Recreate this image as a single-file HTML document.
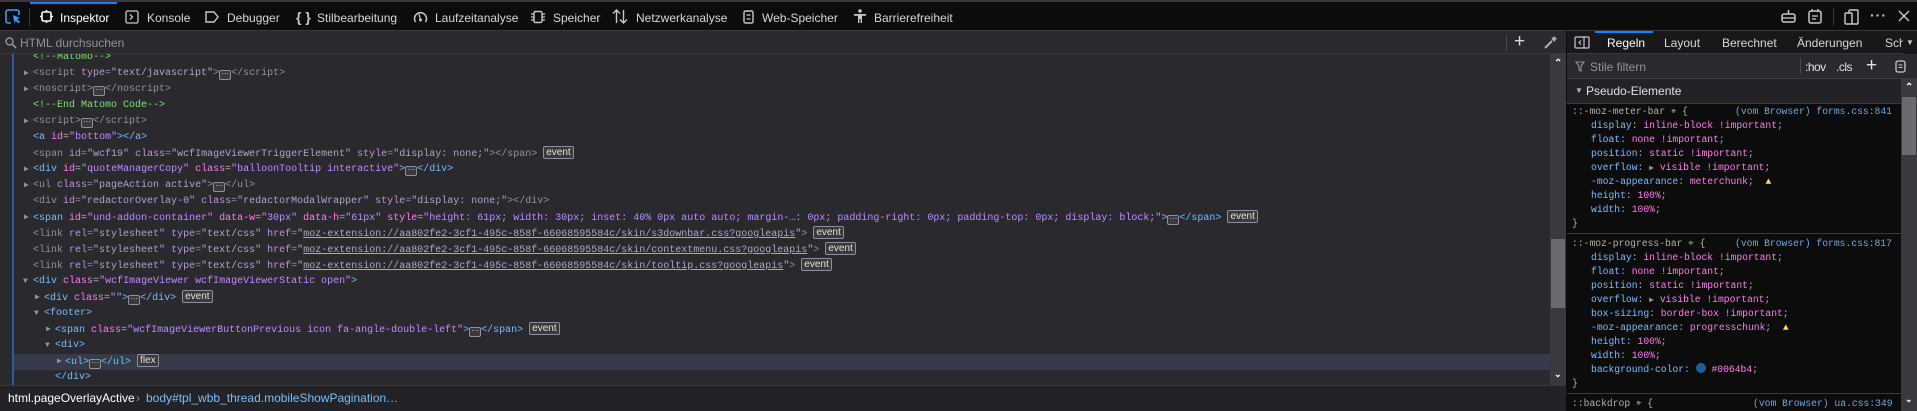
<!DOCTYPE html>
<html><head><meta charset="utf-8"><style>
*{margin:0;padding:0;box-sizing:border-box}
body{width:1917px;height:411px;overflow:hidden;background:#2a2a2e;position:relative;font-family:"Liberation Sans",sans-serif;}
.abs{position:absolute}
#top{left:0;top:0;width:1917px;height:31px;background:#0c0c0d;border-top:2px solid #38383d;border-bottom:1px solid #38383d}
.tab{position:absolute;top:9px;font-size:12px;color:#d7d7db;white-space:nowrap}
.ic{position:absolute;top:8px}
#search{left:0;top:31px;width:1566px;height:23px;background:#2a2a2e;border-bottom:1px solid #38383d}
#markup{left:0;top:54px;width:1550px;height:331px;background:#2a2a2e;overflow:hidden}
.ln{position:absolute;left:0;width:1550px;height:16px;line-height:16px;font-family:"Liberation Mono",monospace;font-size:10px;color:#b1b1b3;white-space:pre}
.tw{position:absolute;top:0;font-size:8px;color:#939395}
.t{color:#75bfff}.a{color:#ff7de9}.v{color:#b98eff}.c{color:#86de74}.p{color:#b1b1b3}
.d,.d .t,.d .a,.d .v{color:#939395}.d .a{color:#b49ad0}.d .v{color:#a9a9c0}
.u{text-decoration:underline}
.b{display:inline-block;border:1px solid #8f8f9d;border-radius:2px;font-family:"Liberation Sans",sans-serif;font-size:10px;line-height:11px;padding:0 2px;color:#e0e0e2;background:#3a3a3e;vertical-align:1px}
.e{display:inline-block;width:12px;height:10px;border:1px solid #8f8f9d;border-radius:2px;background:#3a3a3e;vertical-align:-1px;font-size:8px;line-height:6px;text-align:center;color:#ddd;font-family:"Liberation Sans",sans-serif}
#crumb{left:0;top:385px;width:1566px;height:26px;background:#232327;border-top:1px solid #38383d;font-size:12px;line-height:25px;color:#e0e0e2}
.rl{position:absolute;left:0;height:14px;line-height:14px;font-family:"Liberation Mono",monospace;font-size:9.7px;color:#b1b1b3;white-space:pre}
.pn{color:#75bfff}.pv{color:#ff7de9}.src{color:#6ea8d8}
</style></head><body>
<div id="top" class="abs">
 <svg class="abs" style="left:5px;top:7px" width="17" height="16" viewBox="0 0 17 16"><path d="M6 14H3a2 2 0 0 1-2-2V3a2 2 0 0 1 2-2h9a2 2 0 0 1 2 2v3" fill="none" stroke="#3a9cf5" stroke-width="1.6"/><path d="M8 6l7 3-3 1 3 3-1.5 1.5-3-3-1 3z" fill="#3a9cf5"/></svg>
 <div class="abs" style="left:29px;top:6px;width:1px;height:18px;background:#38383d"></div>
 <div class="abs" style="left:30px;top:0;width:87px;height:2px;background:#0a84ff"></div>
 <svg class="abs" style="left:40px;top:8px" width="13" height="13" viewBox="0 0 13 13"><rect x="2" y="2" width="9" height="9" rx="1.5" fill="none" stroke="#fff" stroke-width="1.6"/><path d="M6.5 0v2M6.5 11v2M0 6.5h2M11 6.5h2" stroke="#fff" stroke-width="1.6"/></svg>
 <div class="tab" style="left:60px;color:#fff">Inspektor</div>
 <svg class="abs" style="left:125px;top:8px" width="14" height="14" viewBox="0 0 14 14"><rect x="1" y="1" width="12" height="12" rx="1.5" fill="none" stroke="#c8c8cc" stroke-width="1.3"/><path d="M5 4.5l2.5 2.5L5 9.5" fill="none" stroke="#c8c8cc" stroke-width="1.3"/></svg>
 <div class="tab" style="left:147px">Konsole</div>
 <svg class="abs" style="left:205px;top:9px" width="14" height="12" viewBox="0 0 14 12"><path d="M1 1h8l4 5-4 5H1z" fill="none" stroke="#c8c8cc" stroke-width="1.4"/></svg>
 <div class="tab" style="left:227px">Debugger</div>
 <div class="tab" style="left:296px;top:7px;font-size:14px;font-weight:bold;color:#c8c8cc">{ }</div>
 <div class="tab" style="left:317px">Stilbearbeitung</div>
 <svg class="abs" style="left:413px;top:8px" width="15" height="14" viewBox="0 0 15 14"><path d="M2.5 12A6 6 0 1 1 12.5 12" fill="none" stroke="#c8c8cc" stroke-width="1.5"/><circle cx="7.5" cy="10" r="1.5" fill="#c8c8cc"/><path d="M7.5 10L6 4" stroke="#c8c8cc" stroke-width="1.3"/></svg>
 <div class="tab" style="left:435px">Laufzeitanalyse</div>
 <svg class="abs" style="left:531px;top:8px" width="14" height="14" viewBox="0 0 14 14"><rect x="3" y="1.5" width="8" height="11" rx="1.5" fill="none" stroke="#c8c8cc" stroke-width="1.4"/><path d="M0 4h3M0 7h3M0 10h3M11 4h3M11 7h3M11 10h3" stroke="#c8c8cc" stroke-width="1.2"/></svg>
 <div class="tab" style="left:553px">Speicher</div>
 <svg class="abs" style="left:612px;top:7px" width="16" height="15" viewBox="0 0 16 15"><path d="M4.5 14V1M1 4.5l3.5-3.5L8 4.5M11.5 1v13M8 10.5l3.5 3.5 3.5-3.5" fill="none" stroke="#c8c8cc" stroke-width="1.4"/></svg>
 <div class="tab" style="left:636px">Netzwerkanalyse</div>
 <svg class="abs" style="left:743px;top:8px" width="11" height="14" viewBox="0 0 11 14"><rect x="1" y="1" width="9" height="12" rx="1.5" fill="none" stroke="#c8c8cc" stroke-width="1.4"/><path d="M3.5 5h4M3.5 9h4" stroke="#c8c8cc" stroke-width="1.3"/></svg>
 <div class="tab" style="left:762px">Web-Speicher</div>
 <svg class="abs" style="left:853px;top:7px" width="14" height="15" viewBox="0 0 14 15"><circle cx="7" cy="2" r="1.8" fill="#c8c8cc"/><path d="M1 5h12v1.8H9V14H7.6v-4H6.4v4H5V6.8H1z" fill="#c8c8cc"/></svg>
 <div class="tab" style="left:874px">Barrierefreiheit</div>
 <svg class="abs" style="left:1781px;top:7px" width="15" height="15" viewBox="0 0 15 15"><path d="M7.5 1v4" stroke="#c8c8cc" stroke-width="1.5"/><rect x="1" y="5" width="13" height="8" rx="2" fill="none" stroke="#c8c8cc" stroke-width="1.5"/><path d="M1 9h13" stroke="#c8c8cc" stroke-width="1.3"/></svg>
 <svg class="abs" style="left:1808px;top:7px" width="14" height="15" viewBox="0 0 14 15"><rect x="1" y="2" width="12" height="12" rx="2" fill="none" stroke="#c8c8cc" stroke-width="1.5"/><path d="M4 0v3M10 0v3M4 7h6M4 10h4" stroke="#c8c8cc" stroke-width="1.3"/></svg>
 <div class="abs" style="left:1833px;top:6px;width:1px;height:18px;background:#38383d"></div>
 <svg class="abs" style="left:1844px;top:7px" width="15" height="16" viewBox="0 0 15 16"><rect x="1" y="4" width="7" height="11" rx="1" fill="none" stroke="#c8c8cc" stroke-width="1.4"/><path d="M5 4V2a1 1 0 0 1 1-1h7a1 1 0 0 1 1 1v12a1 1 0 0 1-1 1h-5" fill="none" stroke="#c8c8cc" stroke-width="1.4"/></svg>
 <div class="tab" style="left:1870px;top:5px;font-size:14px;font-weight:bold;letter-spacing:1px;color:#c8c8cc">···</div>
 <svg class="abs" style="left:1898px;top:8px" width="12" height="12" viewBox="0 0 12 12"><path d="M1 1l10 10M11 1L1 11" stroke="#c8c8cc" stroke-width="1.4"/></svg>
</div>
<div id="search" class="abs">
 <svg class="abs" style="left:5px;top:6px" width="12" height="12" viewBox="0 0 12 12"><circle cx="4.5" cy="4.5" r="3.5" fill="none" stroke="#939395" stroke-width="1.4"/><path d="M7 7l4 4" stroke="#939395" stroke-width="1.6"/></svg>
 <div class="abs" style="left:20px;top:5px;font-size:12px;color:#939395">HTML durchsuchen</div>
 <div class="abs" style="left:1506px;top:4px;width:1px;height:16px;background:#4a4a4f"></div>
 <div class="abs" style="left:1514px;top:0px;font-size:19px;line-height:22px;color:#d7d7db">+</div>
 <svg class="abs" style="left:1543px;top:4px" width="15" height="15" viewBox="0 0 15 15"><path d="M2 13l7-7M9 3l3 3" stroke="#b1b1b3" stroke-width="2"/><path d="M11 1l3 3-2 1-2-2z" fill="#b1b1b3"/></svg>
</div>
<div id="markup" class="abs">
 <div class="abs" style="left:12px;top:0;width:2px;height:331px;background:#2f5c9c"></div>
 <div class="abs" style="left:14px;top:300px;width:1536px;height:16px;background:#353b48"></div>
 <div class="ln" style="top:-4px;left:33px"><span class="c">&lt;!--Matomo--&gt;</span></div>
 <div class="ln d" style="top:12px"><span class="tw" style="left:24px">▶</span><span style="position:absolute;left:33px">&lt;script <span class="a">type</span>=<span class="v">"text/javascript"</span>&gt;<span class="e">···</span>&lt;/script&gt;</span></div>
 <div class="ln d" style="top:28px"><span class="tw" style="left:24px">▶</span><span style="position:absolute;left:33px">&lt;noscript&gt;<span class="e">···</span>&lt;/noscript&gt;</span></div>
 <div class="ln" style="top:44px"><span style="position:absolute;left:33px" class="c">&lt;!--End Matomo Code--&gt;</span></div>
 <div class="ln d" style="top:60px"><span class="tw" style="left:24px">▶</span><span style="position:absolute;left:33px">&lt;script&gt;<span class="e">···</span>&lt;/script&gt;</span></div>
 <div class="ln" style="top:76px"><span style="position:absolute;left:33px"><span class="t">&lt;a</span> <span class="a">id</span>=<span class="v">"bottom"</span><span class="t">&gt;&lt;/a&gt;</span></span></div>
 <div class="ln d" style="top:92px"><span style="position:absolute;left:33px">&lt;span <span class="a">id</span>=<span class="v">"wcf19"</span> <span class="a">class</span>=<span class="v">"wcfImageViewerTriggerElement"</span> <span class="a">style</span>=<span class="v">"display: none;"</span>&gt;&lt;/span&gt; <span class="b">event</span></span></div>
 <div class="ln" style="top:108px"><span class="tw" style="left:24px">▶</span><span style="position:absolute;left:33px"><span class="t">&lt;div</span> <span class="a">id</span>=<span class="v">"quoteManagerCopy"</span> <span class="a">class</span>=<span class="v">"balloonTooltip interactive"</span><span class="t">&gt;</span><span class="e">···</span><span class="t">&lt;/div&gt;</span></span></div>
 <div class="ln d" style="top:124px"><span class="tw" style="left:24px">▶</span><span style="position:absolute;left:33px">&lt;ul <span class="a">class</span>=<span class="v">"pageAction active"</span>&gt;<span class="e">···</span>&lt;/ul&gt;</span></div>
 <div class="ln d" style="top:140px"><span style="position:absolute;left:33px">&lt;div <span class="a">id</span>=<span class="v">"redactorOverlay-0"</span> <span class="a">class</span>=<span class="v">"redactorModalWrapper"</span> <span class="a">style</span>=<span class="v">"display: none;"</span>&gt;&lt;/div&gt;</span></div>
 <div class="ln" style="top:156px"><span class="tw" style="left:24px">▶</span><span style="position:absolute;left:33px"><span class="t">&lt;span</span> <span class="a">id</span>=<span class="v">"und-addon-container"</span> <span class="a">data-w</span>=<span class="v">"30px"</span> <span class="a">data-h</span>=<span class="v">"61px"</span> <span class="a">style</span>=<span class="v">"height: 61px; width: 30px; inset: 40% 0px auto auto; margin-…: 0px; padding-right: 0px; padding-top: 0px; display: block;"</span><span class="t">&gt;</span><span class="e">···</span><span class="t">&lt;/span&gt;</span> <span class="b">event</span></span></div>
 <div class="ln d" style="top:172px"><span style="position:absolute;left:33px">&lt;link <span class="a">rel</span>=<span class="v">"stylesheet"</span> <span class="a">type</span>=<span class="v">"text/css"</span> <span class="a">href</span>=<span class="v">"<span class="u">moz-extension://aa802fe2-3cf1-495c-858f-66068595584c/skin/s3downbar.css?googleapis</span>"</span>&gt; <span class="b">event</span></span></div>
 <div class="ln d" style="top:188px"><span style="position:absolute;left:33px">&lt;link <span class="a">rel</span>=<span class="v">"stylesheet"</span> <span class="a">type</span>=<span class="v">"text/css"</span> <span class="a">href</span>=<span class="v">"<span class="u">moz-extension://aa802fe2-3cf1-495c-858f-66068595584c/skin/contextmenu.css?googleapis</span>"</span>&gt; <span class="b">event</span></span></div>
 <div class="ln d" style="top:204px"><span style="position:absolute;left:33px">&lt;link <span class="a">rel</span>=<span class="v">"stylesheet"</span> <span class="a">type</span>=<span class="v">"text/css"</span> <span class="a">href</span>=<span class="v">"<span class="u">moz-extension://aa802fe2-3cf1-495c-858f-66068595584c/skin/tooltip.css?googleapis</span>"</span>&gt; <span class="b">event</span></span></div>
 <div class="ln" style="top:220px"><span class="tw" style="left:23px">▼</span><span style="position:absolute;left:33px"><span class="t">&lt;div</span> <span class="a">class</span>=<span class="v">"wcfImageViewer wcfImageViewerStatic open"</span><span class="t">&gt;</span></span></div>
 <div class="ln" style="top:236px"><span class="tw" style="left:35px">▶</span><span style="position:absolute;left:44px"><span class="t">&lt;div</span> <span class="a">class</span>=<span class="v">""</span><span class="t">&gt;</span><span class="e">···</span><span class="t">&lt;/div&gt;</span> <span class="b">event</span></span></div>
 <div class="ln" style="top:252px"><span class="tw" style="left:34px">▼</span><span style="position:absolute;left:44px"><span class="t">&lt;footer&gt;</span></span></div>
 <div class="ln" style="top:268px"><span class="tw" style="left:46px">▶</span><span style="position:absolute;left:55px"><span class="t">&lt;span</span> <span class="a">class</span>=<span class="v">"wcfImageViewerButtonPrevious icon fa-angle-double-left"</span><span class="t">&gt;</span><span class="e">···</span><span class="t">&lt;/span&gt;</span> <span class="b">event</span></span></div>
 <div class="ln" style="top:284px"><span class="tw" style="left:45px">▼</span><span style="position:absolute;left:55px"><span class="t">&lt;div&gt;</span></span></div>
 <div class="ln" style="top:300px"><span class="tw" style="left:57px">▶</span><span style="position:absolute;left:65px"><span class="t">&lt;ul&gt;</span><span class="e">···</span><span class="t">&lt;/ul&gt;</span> <span class="b">flex</span></span></div>
 <div class="ln" style="top:316px"><span style="position:absolute;left:55px"><span class="t">&lt;/div&gt;</span></span></div>
</div>
<div class="abs" style="left:1550px;top:54px;width:16px;height:331px;background:#3a3a3e">
 <div class="abs" style="left:4px;top:4px;color:#fff;font-size:10px;font-weight:bold">⌃</div>
 <div class="abs" style="left:1px;top:185px;width:14px;height:69px;background:#6b6b6f"></div>
 <div class="abs" style="left:4px;top:315px;color:#fff;font-size:9px;font-weight:bold">⌄</div>
</div>
<div id="crumb" class="abs"><span class="abs" style="left:8px;color:#fff">html.pageOverlayActive</span><span class="abs" style="left:136px;color:#939395">›</span><span class="abs" style="left:146px;color:#75bfff">body#tpl_wbb_thread.mobileShowPagination…</span></div>
<div class="abs" style="left:1566px;top:31px;width:1px;height:380px;background:#0c0c0d"></div>
<div class="abs" style="left:1567px;top:31px;width:350px;height:23px;background:#18181a;border-bottom:1px solid #38383d">
 <svg class="abs" style="left:7px;top:5px" width="16" height="13" viewBox="0 0 16 13"><rect x="1" y="1" width="14" height="11" rx="1" fill="none" stroke="#c8c8cc" stroke-width="1.2"/><path d="M10 1v11M7 4.5L5 6.5 7 8.5" fill="none" stroke="#c8c8cc" stroke-width="1.2"/></svg>
 <div class="abs" style="left:28px;top:0;width:58px;height:2px;background:#0a84ff"></div>
 <div class="tab" style="left:40px;top:5px;color:#fff">Regeln</div>
 <div class="tab" style="left:97px;top:5px">Layout</div>
 <div class="tab" style="left:155px;top:5px">Berechnet</div>
 <div class="tab" style="left:230px;top:5px">Änderungen</div>
 <div class="tab" style="left:318px;top:5px;width:18px;overflow:hidden">Sch</div>
 <div class="abs" style="left:336px;top:0;width:14px;height:23px;background:#18181a;color:#c8c8cc;font-size:8px;line-height:23px;text-align:center">▼</div>
</div>
<div class="abs" style="left:1567px;top:54px;width:350px;height:25px;background:#2a2a2e;border-bottom:1px solid #38383d">
 <svg class="abs" style="left:8px;top:7px" width="10" height="11" viewBox="0 0 10 11"><path d="M1 1h8L6 5v5L4 9V5z" fill="none" stroke="#939395" stroke-width="1.1"/></svg>
 <div class="abs" style="left:23px;top:6px;font-size:12px;color:#939395">Stile filtern</div>
 <div class="abs" style="left:233px;top:4px;width:1px;height:16px;background:#4a4a4f"></div>
 <div class="abs" style="left:238px;top:6px;font-size:12px;color:#e0e0e2;letter-spacing:-0.5px">:hov</div>
 <div class="abs" style="left:269px;top:6px;font-size:12px;color:#e0e0e2;letter-spacing:-0.5px">.cls</div>
 <div class="abs" style="left:299px;top:1px;font-size:19px;color:#e0e0e2">+</div>
 <svg class="abs" style="left:328px;top:6px" width="11" height="13" viewBox="0 0 11 13"><rect x="1" y="1" width="9" height="11" rx="2" fill="none" stroke="#c8c8cc" stroke-width="1.3"/><path d="M3.5 5h4M3.5 7.5h4" stroke="#c8c8cc" stroke-width="1"/></svg>
</div>
<div class="abs" style="left:1567px;top:79px;width:334px;height:25px;background:#232327;border-bottom:1px solid #38383d;font-size:12px;color:#e0e0e2;line-height:24px"><span class="abs" style="left:8px;font-size:8px;color:#b1b1b3">▼</span><span class="abs" style="left:19px">Pseudo-Elemente</span></div>
<div class="abs" style="left:1567px;top:104px;width:334px;height:307px;background:#0c0c0d;overflow:hidden">
 <div class="rl" style="top:1px;left:5px">::-moz-meter-bar <span style="color:#b1b1b3">⌖</span> {</div>
 <div class="rl src" style="top:1px;left:168px">(vom Browser) forms.css:841</div>
 <div class="rl" style="top:15px;left:24px"><span class="pn">display</span>: <span class="pv">inline-block !important</span>;</div>
 <div class="rl" style="top:29px;left:24px"><span class="pn">float</span>: <span class="pv">none !important</span>;</div>
 <div class="rl" style="top:43px;left:24px"><span class="pn">position</span>: <span class="pv">static !important</span>;</div>
 <div class="rl" style="top:57px;left:24px"><span class="pn">overflow</span>: <span style="color:#939395;font-size:8px">▶</span> <span class="pv">visible !important</span>;</div>
 <div class="rl" style="top:71px;left:24px"><span class="pn">-moz-appearance</span>: <span class="pv">meterchunk</span>;  <span style="color:#ffd567">▲</span></div>
 <div class="rl" style="top:85px;left:24px"><span class="pn">height</span>: <span class="pv">100%</span>;</div>
 <div class="rl" style="top:99px;left:24px"><span class="pn">width</span>: <span class="pv">100%</span>;</div>
 <div class="rl" style="top:113px;left:5px">}</div>
 <div class="abs" style="left:0;top:129px;width:334px;height:1px;background:#38383d"></div>
 <div class="rl" style="top:133px;left:5px">::-moz-progress-bar <span>⌖</span> {</div>
 <div class="rl src" style="top:133px;left:168px">(vom Browser) forms.css:817</div>
 <div class="rl" style="top:147px;left:24px"><span class="pn">display</span>: <span class="pv">inline-block !important</span>;</div>
 <div class="rl" style="top:161px;left:24px"><span class="pn">float</span>: <span class="pv">none !important</span>;</div>
 <div class="rl" style="top:175px;left:24px"><span class="pn">position</span>: <span class="pv">static !important</span>;</div>
 <div class="rl" style="top:189px;left:24px"><span class="pn">overflow</span>: <span style="color:#939395;font-size:8px">▶</span> <span class="pv">visible !important</span>;</div>
 <div class="rl" style="top:203px;left:24px"><span class="pn">box-sizing</span>: <span class="pv">border-box !important</span>;</div>
 <div class="rl" style="top:217px;left:24px"><span class="pn">-moz-appearance</span>: <span class="pv">progresschunk</span>;  <span style="color:#ffd567">▲</span></div>
 <div class="rl" style="top:231px;left:24px"><span class="pn">height</span>: <span class="pv">100%</span>;</div>
 <div class="rl" style="top:245px;left:24px"><span class="pn">width</span>: <span class="pv">100%</span>;</div>
 <div class="rl" style="top:259px;left:24px"><span class="pn">background-color</span>: <span style="display:inline-block;width:10px;height:10px;border-radius:50%;background:#0064b4;border:1px solid #555;vertical-align:-1px"></span> <span class="pv">#0064b4</span>;</div>
 <div class="rl" style="top:273px;left:5px">}</div>
 <div class="abs" style="left:0;top:289px;width:334px;height:1px;background:#38383d"></div>
 <div class="rl" style="top:293px;left:5px">::backdrop <span>⌖</span> {</div>
 <div class="rl src" style="top:293px;left:186px">(vom Browser) ua.css:349</div>
</div>
<div class="abs" style="left:1901px;top:79px;width:16px;height:332px;background:#3a3a3e">
 <div class="abs" style="left:4px;top:3px;color:#fff;font-size:10px;font-weight:bold">⌃</div>
 <div class="abs" style="left:1px;top:18px;width:14px;height:58px;background:#6b6b6f"></div>
 <div class="abs" style="left:4px;top:315px;color:#fff;font-size:9px;font-weight:bold">⌄</div>
</div>
</body></html>
